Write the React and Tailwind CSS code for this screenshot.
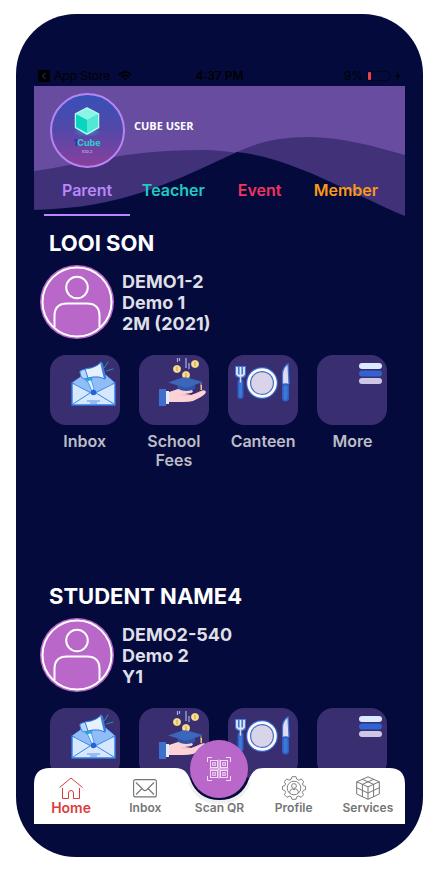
import { useState } from 'react';

const tabs = [
  { name: 'Parent', color: 'text-[#b888fa]' },
  { name: 'Teacher', color: 'text-[#1ecbc3]' },
  { name: 'Event', color: 'text-[#f0355f]' },
  { name: 'Member', color: 'text-[#f99a17]' },
];

const students = [
  { name: 'LOOI SON', code: 'DEMO1-2', school: 'Demo 1', level: '2M (2021)' },
  { name: 'STUDENT NAME4', code: 'DEMO2-540', school: 'Demo 2', level: 'Y1', iconsOnly: true },
];

const InboxArt = () => (
  <svg viewBox="0 0 70 70" className="size-full" aria-hidden="true">
    <path d="M22 28 L33 20 H56 L65 28 Z" fill="#8fbcf8" stroke="#2f7be6" strokeLinejoin="round" />
    <path d="M22 28 H65 V50 H22 Z" fill="#d6e8fe" stroke="#2f7be6" strokeWidth="1.4" strokeLinejoin="round" />
    <path d="M22.500 27.500 L43 39 L64.500 27.500 L56 20.500 H33 Z" fill="#90bdf7" />
    <path d="M22 28 L43 39 L65 28 M23 49 L40 38 M64 49 L46 38" fill="none" stroke="#3a83e8" strokeWidth="1" />
    <path d="M37 25 L41 24 L44 34 L42 36 Z" fill="#e4f0fe" stroke="#2f8ee8" strokeWidth="0.8" />
    <path d="M30 18 Q29 16 32 15 L40 13 L43 22 L34 24 Q31 24 30 18 Z" fill="#b9d7fc" stroke="#2f7be6" />
    <path d="M35 14 L41 13 Q48 11 51 7 L55 24 Q49 21 43 22 L38 23 Z" fill="#e6f1fe" stroke="#2f7be6" />
    <path d="M35 24.500 L42 23 L42.500 25 L36 26.500 Z" fill="#22a5dc" />
    <path d="M50 7 Q52 6 53 9 L56 22 Q56 25 54 24 Z" fill="#3b7de2" />
    <circle cx="43.500" cy="37.500" r="2.800" fill="#2563d0" />
    <path d="M37 46 H50 M40 48 H47" stroke="#4a86dc" strokeWidth="0.9" />
    <path d="M54.500 12.500 L58 7 M56.500 16 L63 14" stroke="#2396a8" strokeWidth="1" strokeLinecap="round" />
  </svg>
);

const Coin = ({ cx, cy }) => (
  <g>
    <circle cx={cx} cy={cy} r="3.600" fill="#fbe49c" stroke="#f3cf86" strokeWidth="0.8" />
    <path
      d={`M${cx + 1.2} ${cy - 1.3} q-2.600 -0.800 -2.400 0.500 q0.200 0.800 1.200 0.800 q1.400 0 1.200 1 q-0.400 1 -2.400 0.200 M${cx} ${cy - 2.4} v4.800`}
      fill="none"
      stroke="#d9a948"
      strokeWidth="0.7"
    />
  </g>
);

const FeesArt = () => (
  <svg viewBox="0 0 70 70" className="size-full" aria-hidden="true">
    <path d="M38.500 3 V7 M40.500 3 V6 M47 3 V13 M50 8 V14" stroke="#9fb0ee" strokeWidth="1.200" />
    <Coin cx={38} cy={14} />
    <Coin cx={56} cy={9} />
    <Coin cx={47} cy={20} />
    <path d="M20 34 H27 V51 H20 Z" fill="#3f6fca" />
    <path d="M27 36 H30 V49 H27 Z" fill="#e2ecff" />
    <path
      d="M30 37 L39 34 Q42 33 45 34 L53 35 Q55 37 52 38 L46 39 L52 40 Q58 38 62 36 Q66 34 67 37 Q66 40 60 43 L54 46 Q50 47 44 47 L30 47 Z"
      fill="#fbd3d6"
    />
    <path d="M42 40 L51 40 M58 38 L63 36" stroke="#eab0ba" strokeWidth="0.7" fill="none" />
    <path d="M38 29 L39 34 Q47 38 56 34 V29 Z" fill="#2f56a6" />
    <path d="M29 27.500 L42 23 Q46 21.500 50 23 L64 27 L50 32 Q47 33 44 32 Z" fill="#3b66ba" />
    <path d="M62 28 V31" stroke="#c99e58" strokeWidth="1" />
    <path d="M61.500 30 H63 V35 H61.500 Z" fill="#f0ca85" />
  </svg>
);

const CanteenArt = () => (
  <svg viewBox="0 0 70 70" className="size-full" aria-hidden="true">
    <path d="M7 11 H18 V19 Q18 22 15 23 H11 Q7 22 7 19 Z" fill="#3f77dc" />
    <path d="M9 12 V19 Q10 21 12.500 21 Q15 21 16 19 V12 M12.500 12 V22" fill="none" stroke="#e6e8f8" strokeWidth="1.800" />
    <path d="M12.500 27 V41" stroke="#2d5fc4" strokeWidth="6" strokeLinecap="round" />
    <path d="M12.500 21 V28" stroke="#cfd8f5" strokeWidth="1.600" />
    <path d="M12.500 29 V41" stroke="#3a79d8" strokeWidth="3" strokeLinecap="round" />
    <circle cx="34" cy="28" r="16" fill="#3565d4" />
    <circle cx="34" cy="28" r="14.800" fill="#fafaff" />
    <circle cx="34" cy="28" r="12" fill="#4a6cc0" />
    <circle cx="34" cy="28" r="10.800" fill="#d9d4ea" />
    <path d="M54.500 29 V19 Q55 12 60 9 L61 29 Z" fill="#dcdcf2" stroke="#3f77dc" strokeWidth="1.200" />
    <path d="M57.500 32 V43" stroke="#2d5fc4" strokeWidth="7" strokeLinecap="round" />
    <path d="M57.500 32 V43" stroke="#3a79d8" strokeWidth="4" strokeLinecap="round" />
  </svg>
);

const MoreArt = () => (
  <svg viewBox="0 0 70 70" className="size-full" aria-hidden="true">
    <rect x="42" y="8" width="23" height="6" rx="3" fill="#dbeafd" />
    <rect x="42" y="15.500" width="23" height="6" rx="3" fill="#3262cf" />
    <rect x="42" y="23" width="23" height="6" rx="3" fill="#cfc6e6" />
  </svg>
);

const actions = [
  { label: 'Inbox', Art: InboxArt },
  { label: 'School Fees', Art: FeesArt },
  { label: 'Canteen', Art: CanteenArt },
  { label: 'More', Art: MoreArt },
];

const HomeIcon = () => (
  <svg viewBox="0 0 24 24" className="size-6" fill="none" stroke="currentColor" strokeWidth="1" aria-hidden="true">
    <path d="M0.500 11.500 L12 2 L23.500 11.500" />
    <path d="M3.500 12 V22.500 H9.500 V17 Q9.500 14.500 12 14.500 Q14.500 14.500 14.500 17 V22.500 H20.500 V12" />
  </svg>
);

const MailIcon = () => (
  <svg viewBox="0 0 24 24" className="size-6" fill="none" stroke="currentColor" strokeWidth="1.100" aria-hidden="true">
    <rect x="0.600" y="3.600" width="22.800" height="17.300" rx="2" />
    <path d="M3 6.500 L10.500 14 Q12 15.300 13.500 14 L21 6.500 M3 18.500 L9 12.500 M21 18.500 L15 12.500" />
  </svg>
);

const GearUserIcon = () => (
  <svg viewBox="0 0 24 24" className="size-6" fill="none" stroke="currentColor" strokeWidth="0.9" aria-hidden="true">
    <path d="M10 0.700 H14 L14.800 3.300 L16.900 4.200 L19.300 2.900 L21.700 5.700 L20.500 8 L21.200 9.700 L23.500 10.300 V13.700 L21.200 14.500 L20.400 16.400 L21.600 18.700 L19 21.300 L16.700 20.100 L14.800 20.800 L14 23.300 H10 L9.200 20.800 L7.300 20.100 L5 21.300 L2.400 18.700 L3.600 16.400 L2.800 14.500 L0.500 13.700 V10.300 L2.800 9.700 L3.500 8 L2.300 5.700 L4.700 2.900 L7.100 4.200 L9.200 3.300 Z" strokeLinejoin="round" />
    <circle cx="12" cy="12" r="6.800" />
    <circle cx="12" cy="10" r="2.400" />
    <path d="M7.800 17 V15.500 Q8 13.500 10.300 13 Q12 14.200 13.700 13 Q16 13.500 16.200 15.500 V17" />
  </svg>
);

const CubesIcon = () => (
  <svg viewBox="0 0 24 24" className="size-6" fill="none" stroke="currentColor" strokeWidth="1" strokeLinejoin="round" aria-hidden="true">
    <path d="M12 0.800 L23.300 5.800 V18 L12 23.300 L0.700 18 V5.800 Z" />
    <path d="M0.700 5.800 L12 10.800 L23.300 5.800 M12 10.800 V23.300" />
    <path d="M6.300 3.300 L17.600 8.300 V20.700 M17.700 3.300 L6.400 8.300 V20.700" />
    <path d="M0.700 11.800 L12 17 L23.300 11.800" />
  </svg>
);

const QrIcon = () => (
  <svg viewBox="0 0 24 24" className="size-6" fill="none" stroke="#f3dff6" strokeWidth="1" aria-hidden="true">
    <path d="M0.500 5 V0.500 H5 M19 0.500 H23.500 V5 M23.500 19 V23.500 H19 M5 23.500 H0.500 V19" />
    <path d="M12 2.500 V21.500 M2.500 12 H21.500" />
    {[3.5, 13.5].map((x) =>
      [3.5, 13.5].map((y) => (
        <g key={`${x}-${y}`}>
          <rect x={x} y={y} width="7" height="7" />
          <rect x={x + 2.2} y={y + 2.2} width="2.600" height="2.600" />
        </g>
      ))
    )}
  </svg>
);

const navItems = [
  { label: 'Home', Icon: HomeIcon },
  { label: 'Inbox', Icon: MailIcon },
  { label: 'Scan QR', Icon: QrIcon, scan: true },
  { label: 'Profile', Icon: GearUserIcon },
  { label: 'Services', Icon: CubesIcon },
];

function StatusBar() {
  return (
    <div className="grid h-5 shrink-0 grid-cols-3 items-center px-1 text-xs text-black">
      <div className="flex items-center gap-1">
        <svg viewBox="0 0 12 12" className="size-3 shrink-0" aria-hidden="true">
          <rect width="12" height="12" rx="2" fill="#000" />
          <path d="M7.500 3 L4.500 6 L7.500 9" fill="none" stroke="#1a2250" strokeWidth="1.300" />
        </svg>
        <span className="whitespace-nowrap">App Store</span>
        <svg viewBox="0 0 14 10" className="ml-1 h-[10px] w-[14px] shrink-0" fill="none" stroke="#000" strokeWidth="1.800" aria-hidden="true">
          <path d="M0.800 3.800 Q7 -1.800 13.200 3.800 M3.200 6 Q7 2.800 10.800 6" />
          <path d="M5 7.500 Q7 6 9 7.500 L7 9.600 Z" fill="#000" stroke="none" />
        </svg>
      </div>
      <div className="text-center font-semibold">4:37 PM</div>
      <div className="flex items-center justify-end gap-1">
        <span>9%</span>
        <svg viewBox="0 0 34 10" className="h-[10px] w-[34px]" aria-hidden="true">
          <rect x="0.500" y="0.500" width="22" height="9" rx="2.500" fill="none" stroke="#02051f" />
          <rect x="1" y="1" width="3" height="8" rx="1" fill="#f04048" />
          <path d="M24 3.500 Q25.500 5 24 6.500 Z" fill="#02051f" />
          <path d="M32 1 L28 5.700 H30.500 L29.500 9.500 L33.500 4.500 H31 Z" fill="#000" />
        </svg>
      </div>
    </div>
  );
}

function CubeLogo() {
  return (
    <svg viewBox="0 0 75 75" className="size-[75px] shrink-0" role="img" aria-label="1Cube">
      <defs>
        <linearGradient id="logoBg" x1="0" y1="0" x2="0" y2="1">
          <stop offset="0" stopColor="#3550b8" />
          <stop offset="0.5" stopColor="#5348a8" />
          <stop offset="1" stopColor="#8c3f9b" />
        </linearGradient>
        <radialGradient id="logoGlow">
          <stop offset="0" stopColor="#30a0d8" stopOpacity="0.8" />
          <stop offset="1" stopColor="#30a0d8" stopOpacity="0" />
        </radialGradient>
      </defs>
      <circle cx="37.500" cy="37.500" r="36.500" fill="url(#logoBg)" stroke="#b884f5" strokeWidth="2" />
      <ellipse cx="37" cy="39" rx="14" ry="5" fill="url(#logoGlow)" />
      <path d="M37 15 L48.500 21 V34.500 L37 41 L25.500 34.500 V21 Z" fill="#3fe0cf" stroke="#b5fbf0" strokeWidth="1.500" strokeLinejoin="round" />
      <path d="M37 15.500 L48 21.300 L37 27 L26 21.300 Z" fill="#8af5e6" />
      <path d="M26 21.300 L37 27 V40 L26 34 Z" fill="#08d5bd" />
      <path d="M37 27 L48 21.300 V34 L37 40 Z" fill="#52e8d6" />
      <text x="37" y="53" textAnchor="middle" className="text-[9px] font-bold">
        <tspan fill="#1735b0">1</tspan>
        <tspan fill="#2fd0d2">Cube</tspan>
      </text>
      <text x="37" y="60" textAnchor="middle" fill="#d9c8ec" className="text-[4px]">
        v20.2
      </text>
    </svg>
  );
}

function Header({ active, onSelect }) {
  return (
    <header className="relative flex h-[130px] shrink-0 flex-col bg-[#684ca0]">
      <svg viewBox="0 0 371 130" preserveAspectRatio="none" className="absolute inset-0 size-full" aria-hidden="true">
        <path d="M0 85 C40 80 90 64 166 64 C240 64 300 100 371 130 H0 Z" fill="#403179" />
        <path d="M0 124 C90 122 140 95 203 66 C225 56 245 51 275 51 C305 51 340 60 371 69 V130 H0 Z" fill="#403179" />
        <path d="M0 124 C90 122 140 95 203 66 C258 72 310 104 371 130 H0 Z" fill="#040b3c" />
      </svg>
      <div className="relative flex items-center gap-[9px] pt-[7px] pl-4">
        <CubeLogo />
        <h1 className="mb-2 font-['Open_Sans',sans-serif] text-[11px] font-bold text-white">CUBE USER</h1>
      </div>
      <nav className="relative mt-auto grid grid-cols-4 pr-4 pl-[10px]">
        {tabs.map((tab) => (
          <button
            key={tab.name}
            type="button"
            onClick={() => onSelect(tab.name)}
            className={`h-10 border-b-2 pb-[10px] text-base font-semibold ${tab.color} ${
              active === tab.name ? 'border-[#b888fa]' : 'border-transparent'
            }`}
          >
            {tab.name}
          </button>
        ))}
      </nav>
    </header>
  );
}

function Student({ student }) {
  return (
    <section className="min-h-[353px] shrink-0 pt-[13px]">
      <h2 className="pl-[15px] text-[22px] leading-7 font-bold text-white">{student.name}</h2>
      <div className="mt-2 flex items-center gap-2 pl-[6px]">
        <svg viewBox="0 0 74 74" className="size-[74px] shrink-0" aria-hidden="true">
          <circle cx="37" cy="37" r="37" fill="#b968c9" />
          <circle cx="37" cy="37" r="34.500" fill="none" stroke="#fff" strokeWidth="2" />
          <circle cx="37" cy="22.500" r="10.800" fill="none" stroke="#fff" strokeWidth="2" />
          <path d="M14.500 62 V51 Q14.500 38.500 27 38.500 H47 Q59.500 38.500 59.500 51 V62" fill="none" stroke="#fff" strokeWidth="2" />
        </svg>
        <div className="text-[18px] leading-[21px] font-bold text-[#dfdfe6]">
          <p>{student.code}</p>
          <p>{student.school}</p>
          <p>{student.level}</p>
        </div>
      </div>
      <div className="mt-4 grid grid-cols-4 pr-2 pl-[6px]">
        {actions.map(({ label, Art }) => (
          <button
            key={label}
            type="button"
            aria-label={label}
            className="flex flex-col items-center justify-start gap-[7px]"
          >
            <span className="block size-[70px] rounded-2xl bg-[#392e70]">
              <Art />
            </span>
            {!student.iconsOnly && (
              <span className="w-[72px] text-base leading-[19px] font-semibold text-[#bdbdc6]">{label}</span>
            )}
          </button>
        ))}
      </div>
    </section>
  );
}

function BottomNav({ active, onSelect }) {
  return (
    <nav className="absolute inset-x-0 bottom-0 h-14">
      <svg viewBox="0 0 371 56" preserveAspectRatio="none" className="absolute inset-0 size-full" aria-hidden="true">
        <path
          d="M0 16 Q0 0 16 0 H141 C151 0 153 5 156 11 C161 25 171 32 185.500 32 C200 32 210 25 215 11 C218 5 220 0 230 0 H355 Q371 0 371 16 V56 H0 Z"
          fill="#fff"
        />
        <path d="M156 14 C161 27 171 34 185.500 34 C200 34 210 27 215 14" fill="none" stroke="#000" strokeOpacity="0.06" strokeWidth="4" />
      </svg>
      <div className="relative grid h-full grid-cols-5">
        {navItems.map(({ label, Icon, scan }) => {
          const on = active === label;
          return (
            <button
              key={label}
              type="button"
              onClick={() => onSelect(label)}
              className={`relative flex flex-col items-center justify-end pb-2 leading-4 font-semibold whitespace-nowrap ${
                on ? 'text-sm text-[#dc3d3b]' : 'text-xs text-[#757575]'
              }`}
            >
              {scan ? (
                <span className="absolute -top-7 flex size-[58px] items-center justify-center rounded-full bg-[#b968c9]">
                  <Icon />
                </span>
              ) : (
                <Icon />
              )}
              <span>{label}</span>
            </button>
          );
        })}
      </div>
    </nav>
  );
}

export default function App() {
  const [tab, setTab] = useState('Parent');
  const [page, setPage] = useState('Home');

  return (
    <div className="flex h-screen flex-col bg-white px-4 py-[14px] font-[Inter,sans-serif]">
      <div className="flex min-h-0 flex-1 flex-col rounded-[60px] bg-[#040b3c] px-[18px] pt-[52px] pb-[33px]">
        <div className="relative flex min-h-0 flex-1 flex-col">
          <StatusBar />
          <Header active={tab} onSelect={setTab} />
          <main className="mb-11 min-h-0 flex-1 overflow-y-auto [scrollbar-width:none]">
            {students.map((student) => (
              <Student key={student.code} student={student} />
            ))}
          </main>
          <BottomNav active={page} onSelect={setPage} />
        </div>
      </div>
    </div>
  );
}
